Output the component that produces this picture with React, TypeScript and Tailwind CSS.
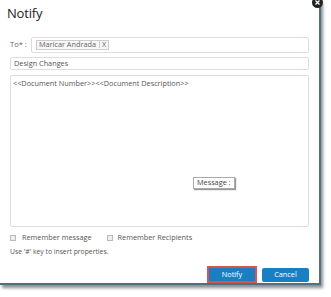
import React from "react";

export default function App() {
  return (
    <div className="w-[331px] h-[297px] bg-white relative overflow-hidden" style={{ fontFamily: '"Open Sans", "Noto Sans", sans-serif' }}>
      <div className="w-[321px] h-[285px] bg-white border-r-[2px] border-b-[2px] border-[#4f6f82] shadow-[2px_3px_3px_rgba(0,0,0,0.45)] flex flex-col pl-[10px] pr-[10px]">
        <div className="text-[13px] text-[#222] leading-none pt-[7px] pl-[-3px] h-[37px] -ml-[3px] tracking-[-0.2px]">Notify</div>
        <div className="flex items-center h-[16px]">
          <span className="text-[7.5px] text-[#666] w-[21px] leading-none">To* :</span>
          <div className="flex-1 h-[16px] border border-[#ddd] rounded-[2px] flex items-center px-[4px]">
            <div className="h-[10px] border border-[#ccc] bg-[#f7f7f7] flex items-center text-[7.3px] text-[#666] leading-none pl-[2px]">
              <span>Maricar Andrada</span>
              <span className="ml-[3px] border-l border-[#ccc] px-[2px]">X</span>
            </div>
          </div>
        </div>
        <div className="mt-[4px] h-[13px] border border-[#ddd] rounded-[2px] flex items-center px-[3px] text-[7.3px] text-[#555] leading-none">
          Design Changes
        </div>
        <div className="mt-[5px] h-[153px] border border-[#ddd] rounded-[2px] relative px-[2px] pt-[4px] text-[7.3px] text-[#555] leading-none">
          &lt;&lt;Document Number&gt;&gt;&lt;&lt;Document Description&gt;&gt;
          <div className="absolute left-[182px] top-[101px] border border-[#aaa] bg-white px-[3px] py-[1.5px] text-[7.3px] text-[#444] shadow-[1px_1px_1px_rgba(0,0,0,0.4)]">Message :</div>
        </div>
        <div className="mt-[7px] flex items-center text-[7.3px] text-[#555] leading-none">
          <span className="w-[6px] h-[6px] border border-[#bbb] bg-[#eee]"></span>
          <span className="ml-[6px]">Remember message</span>
          <span className="ml-[15px] w-[6px] h-[6px] border border-[#bbb] bg-[#eee]"></span>
          <span className="ml-[5px]">Remember Recipients</span>
        </div>
        <div className="mt-[8px] text-[6.8px] text-[#555] leading-none">Use '#' key to insert properties.</div>
        <div className="mt-[10px] flex justify-end items-center gap-[5px]">
          <div className="border-[2px] border-[#d9534f] p-0">
            <div className="w-[46px] h-[13px] bg-[#1a7fc1] text-white text-[7.3px] flex items-center justify-center leading-none">Notify</div>
          </div>
          <div className="w-[47px] h-[14px] bg-[#1a7fc1] rounded-[2px] text-white text-[7.3px] flex items-center justify-center leading-none">Cancel</div>
        </div>
      </div>
      <svg className="absolute left-[312px] top-[-3px]" width="11" height="11" viewBox="0 0 11 11">
        <circle cx="5.5" cy="5.5" r="5.5" fill="#222" />
        <path d="M3.5 3.5 L7.5 7.5 M7.5 3.5 L3.5 7.5" stroke="#fff" strokeWidth="1.3" />
      </svg>
    </div>
  );
}
